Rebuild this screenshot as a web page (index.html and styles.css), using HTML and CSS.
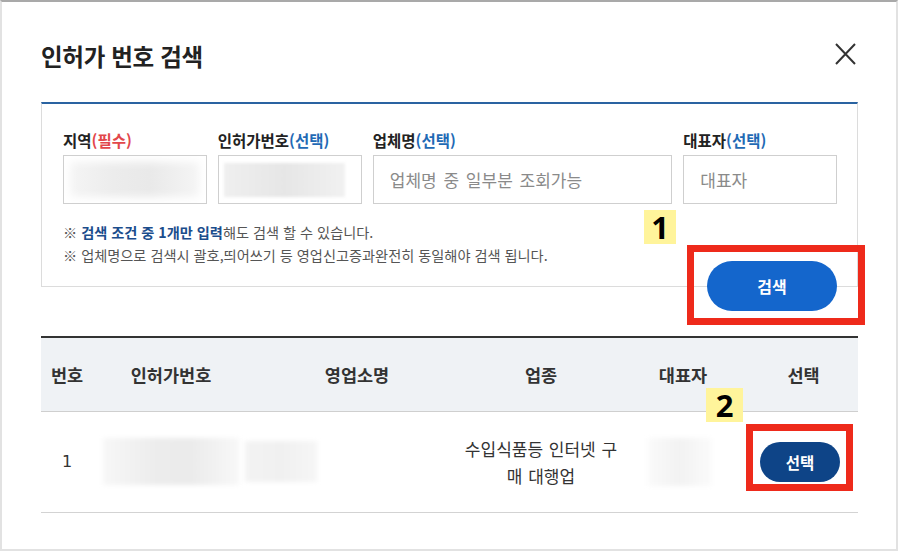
FILE: index.html
```html
<!DOCTYPE html>
<html lang="ko">
<head>
<meta charset="utf-8">
<title>인허가 번호 검색</title>
<link rel="stylesheet" href="styles.css">
</head>
<body>
<div class="modal">
  <div class="modal-head">
    <h1 class="title">인허가 번호 검색</h1>
    <button class="close" type="button" aria-label="닫기">
      <svg width="21" height="22" viewBox="0 0 21 22"><path d="M1 1 L20 21 M20 1 L1 21" stroke="#333" stroke-width="2" fill="none"/></svg>
    </button>
  </div>

  <div class="search-box">
    <div class="fields">
      <div class="field f1">
        <label class="lbl">지역<span class="req">(필수)</span></label>
        <div class="input blur-full"></div>
      </div>
      <div class="field f2">
        <label class="lbl">인허가번호<span class="opt">(선택)</span></label>
        <div class="input"><span class="blur-inner"></span></div>
      </div>
      <div class="field f3">
        <label class="lbl">업체명<span class="opt">(선택)</span></label>
        <div class="input"><span class="ph">업체명 중 일부분 조회가능</span></div>
      </div>
      <div class="field f4">
        <label class="lbl">대표자<span class="opt">(선택)</span></label>
        <div class="input"><span class="ph">대표자</span></div>
      </div>
    </div>
    <div class="bottom">
      <div class="notes">
        <p>※ <strong>검색 조건 중 1개만 입력</strong>해도 검색 할 수 있습니다.</p>
        <p>※ 업체명으로 검색시 괄호,띄어쓰기 등 영업신고증과완전히 동일해야 검색 됩니다.</p>
      </div>
      <button class="btn-search" type="button">검색</button>
    </div>
  </div>

  <table class="result">
    <colgroup>
      <col class="c1"><col class="c2"><col class="c3"><col class="c4"><col class="c5"><col class="c6">
    </colgroup>
    <thead>
      <tr><th>번호</th><th>인허가번호</th><th>영업소명</th><th>업종</th><th>대표자</th><th>선택</th></tr>
    </thead>
    <tbody>
      <tr>
        <td class="num">1</td>
        <td><span class="blur b1"></span></td>
        <td class="left"><span class="blur b2"></span></td>
        <td><div class="type">수입식품등 인터넷 구매 대행업</div></td>
        <td><span class="blur b3"></span></td>
        <td><button class="btn-select" type="button">선택</button></td>
      </tr>
    </tbody>
  </table>

  <div class="mark mark1"></div>
  <div class="badge badge1">1</div>
  <div class="mark mark2"></div>
  <div class="badge badge2">2</div>
</div>
</body>
</html>
```

FILE: styles.css
```css
* { box-sizing: border-box; }
html, body { margin: 0; padding: 0; background: #fff; }
body { font-family: "Noto Sans CJK KR", "Noto Sans", sans-serif; color: #222; }

.modal {
  position: relative;
  width: 898px;
  height: 551px;
  border-top: 2px solid #a9a9a9;
  border-left: 2px solid #e2e2e2;
  border-right: 2px solid #e2e2e2;
  border-bottom: 2px solid #e2e2e2;
  padding: 0 38px 0 39px;
  overflow: hidden;
}

.modal-head {
  height: 100px;
  display: flex;
  justify-content: space-between;
  align-items: flex-start;
  padding-top: 39px;
}
.title {
  margin: 0;
  font-size: 23.5px;
  line-height: 30px;
  font-weight: 700;
  color: #222;
  letter-spacing: -0.3px;
}
.close {
  margin: 2px 2px 0 0;
  padding: 0;
  border: 0;
  background: none;
  width: 21px;
  height: 22px;
}
.close svg { display: block; }

.search-box {
  border: 1px solid #dcdcdc;
  border-top: 2px solid #2a63a1;
  padding: 26px 20px 0 21px;
  height: 185px;
}
.fields { display: flex; gap: 11px; }
.f1, .f2 { width: 144px; }
.f3 { width: 300px; }
.f4 { width: 154px; }
.lbl {
  display: block;
  font-size: 15.5px;
  font-weight: 700;
  line-height: 20px;
  margin-bottom: 5px;
  color: #222;
  white-space: nowrap;
}
.req { color: #e2474b; }
.opt { color: #1f6ab5; }
.input {
  height: 49px;
  border: 1px solid #cfcfcf;
  background: #fff;
  display: flex;
  align-items: center;
  padding: 0 16px;
}
.ph { font-size: 17px; word-spacing: 2px; color: #8a8a8a; white-space: nowrap; }
.blur-full {
  background: linear-gradient(90deg, #f6f6f6 0%, #ececec 35%, #e9e9e9 60%, #f7f7f7 100%);
  box-shadow: inset 0 0 8px 6px #fff;
}
.blur-inner {
  display: block;
  width: 130px;
  height: 34px;
  margin-left: -11px;
  background: linear-gradient(90deg, #efefef, #e6e6e6 50%, #f1f1f1);
  filter: blur(1.5px);
}

.bottom {
  display: flex;
  justify-content: space-between;
  align-items: flex-start;
  margin-top: 17px;
}
.notes p {
  margin: 0;
  font-size: 14.2px;
  line-height: 23px;
  color: #555;
  white-space: nowrap;
}
.notes strong { color: #1b4d8c; font-weight: 700; }
.btn-search {
  margin-top: 40px;
  margin-bottom: -25px;
  width: 130px;
  height: 50px;
  border: 0;
  border-radius: 25px;
  background: #1466cc;
  color: #fff;
  font-family: inherit;
  font-size: 16px;
  font-weight: 700;
}

.result {
  margin-top: 49px;
  width: 817px;
  border-collapse: collapse;
  table-layout: fixed;
  border-top: 2px solid #333;
}
.c1 { width: 52px; }
.c2 { width: 156px; }
.c3 { width: 216px; }
.c4 { width: 152px; }
.c5 { width: 132px; }
.c6 { width: 109px; }
.result th {
  height: 74px;
  background: #eff2f5;
  border-bottom: 1px solid #cfcfcf;
  font-size: 17.5px;
  font-weight: 700;
  color: #333;
  text-align: center;
  padding: 0;
  white-space: nowrap;
}
.result td {
  height: 101px;
  border-bottom: 1px solid #d3d3d3;
  text-align: center;
  padding: 0;
  font-size: 17px;
  color: #333;
}
.result td.left { text-align: left; }
.num { font-family: "DejaVu Sans", sans-serif; font-size: 16px !important; }
.type {
  width: 158px;
  margin: 0 -3px 0 -3px;
  line-height: 27px;
  word-spacing: 1px;
  color: #333;
}
.blur {
  display: inline-block;
  vertical-align: middle;
  filter: blur(2px);
}
.b1 {
  width: 136px; height: 47px;
  background: linear-gradient(90deg, #f7f7f7, #ececec 40%, #ebebeb 65%, #f8f8f8);
}
.b2 {
  width: 72px; height: 41px; margin-left: -4px;
  background: linear-gradient(90deg, #f3f3f3, #f0f0f0 50%, #f6f6f6);
}
.b3 {
  width: 64px; height: 48px; margin-left: -6px;
  background: linear-gradient(90deg, #fafafa, #f2f2f2 50%, #fbfbfb);
}
.btn-select {
  width: 80px;
  height: 40px;
  border: 0;
  border-radius: 20px;
  background: #0e4487;
  color: #fff;
  font-family: inherit;
  font-size: 15.5px;
  font-weight: 700;
  margin-left: -7px;
}

/* annotation overlays */
.mark {
  position: absolute;
  border: 7px solid #ee2a1b;
}
.mark1 { left: 685px; top: 243px; width: 178px; height: 80px; }
.mark2 { left: 744px; top: 422px; width: 107px; height: 67px; }
.badge {
  position: absolute;
  background: #fff49b;
  color: #000;
  font-family: "Open Sans", "Noto Sans", sans-serif;
  font-weight: 700;
  font-size: 31px;
  line-height: 34px;
  text-align: center;
}
.badge1 { left: 642px; top: 208px; width: 32px; height: 34px; }
.badge2 { left: 704px; top: 386px; width: 37px; height: 34px; }
```
